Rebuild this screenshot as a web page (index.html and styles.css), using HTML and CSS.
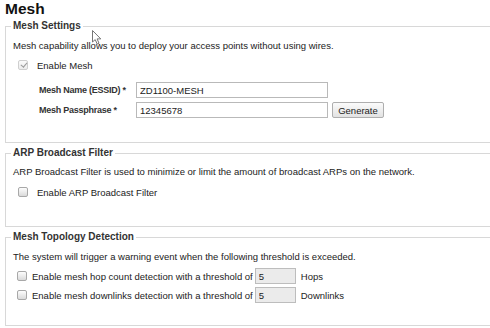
FILE: index.html
```html
<!DOCTYPE html>
<html lang="en">
<head>
	<meta charset="UTF-8">
	<title>Mesh</title>
	<link rel="stylesheet" href="styles.css">
</head>
<body>

<div class="page">
	<h1>Mesh</h1>

	<fieldset class="section mesh-settings">
		<legend>Mesh Settings</legend>
		<p class="desc">Mesh capability allows you to deploy your access points without using wires.</p>
		<label class="check indent"><input type="checkbox" checked disabled> Enable Mesh</label>
		<div class="field first">
			<label for="essid">Mesh Name (ESSID) *</label>
			<input type="text" id="essid" class="text" value="ZD1100-MESH">
		</div>
		<div class="field">
			<label for="passphrase">Mesh Passphrase *</label>
			<input type="text" id="passphrase" class="text" value="12345678">
			<button type="button" class="btn">Generate</button>
		</div>
	</fieldset>

	<fieldset class="section arp-filter">
		<legend>ARP Broadcast Filter</legend>
		<p class="desc">ARP Broadcast Filter is used to minimize or limit the amount of broadcast ARPs on the network.</p>
		<label class="check indent"><input type="checkbox"> Enable ARP Broadcast Filter</label>
	</fieldset>

	<fieldset class="section topology">
		<legend>Mesh Topology Detection</legend>
		<p class="desc">The system will trigger a warning event when the following threshold is exceeded.</p>
		<div class="check threshold first">
			<input type="checkbox" id="hop-count">
			<label for="hop-count">Enable mesh hop count detection with a threshold of</label>
			<input type="text" class="num" value="5" disabled>
			<span>Hops</span>
		</div>
		<div class="check threshold">
			<input type="checkbox" id="downlinks">
			<label for="downlinks">Enable mesh downlinks detection with a threshold of</label>
			<input type="text" class="num" value="5" disabled>
			<span>Downlinks</span>
		</div>
	</fieldset>

	<svg class="cursor" width="10" height="15" viewBox="0 0 10 15">
		<path d="M0.5 0.5 L0.5 12 L3.2 9.6 L5.2 14 L7 13.2 L5.1 8.9 L8.8 8.9 Z" fill="#fff" stroke="#555" stroke-width="1" stroke-linejoin="round"/>
	</svg>
</div>

</body>
</html>
```

FILE: styles.css
```css
html, body {
	margin: 0;
	padding: 0;
	overflow: hidden;
}

body {
	background: #fff;
	color: #222;
	font-family: "Liberation Sans", Arial, sans-serif;
	font-size: 9.5px;
}

.page {
	position: relative;
}

h1 {
	margin: 0;
	padding: 0 0 0 5px;
	font-size: 15.5px;
	line-height: 18px;
	font-weight: 700;
	color: #111;
}

/* the right edge of each box runs off the frame in the original */
.section {
	margin: 1px 0 3px 5px;
	padding: 0 0 0 7px;
	border: 1px solid #d8d8d8;
	border-right: 0;
}

.section legend {
	margin-left: -2px;
	padding: 0 2px;
	font-size: 10px;
	font-weight: 700;
	line-height: 14px;
	color: #333;
}

.desc {
	margin: 6px 0 0;
	line-height: 14px;
}

.arp-filter .desc {
	margin-top: 5px;
}

.check {
	display: flex;
	align-items: center;
	gap: 5px;
	height: 14px;
	margin-top: 5px;
	padding-left: 4px;
}

.check.indent {
	gap: 9px;
	padding-left: 5px;
}

.arp-filter .check {
	margin-top: 6px;
}

.check input[type="checkbox"] {
	-webkit-appearance: none;
	appearance: none;
	position: relative;
	box-sizing: border-box;
	width: 10px;
	height: 10px;
	margin: 0;
	border: 1px solid #a8a8a8;
	border-radius: 2px;
	background: linear-gradient(#fdfdfd, #dadada);
}

.check input[type="checkbox"]:disabled {
	border-color: #cfcfcf;
	background: linear-gradient(#fafafa, #ececec);
}

.check input[type="checkbox"]:checked::after {
	content: "";
	position: absolute;
	left: 2.5px;
	top: 0;
	width: 2.5px;
	height: 5px;
	border: solid #9a9a9a;
	border-width: 0 1.5px 1.5px 0;
	transform: rotate(40deg);
}

.field {
	display: flex;
	align-items: center;
	height: 16px;
	margin-top: 4px;
	padding-left: 26px;
}

.field.first {
	margin-top: 10px;
}

.field label {
	width: 97px;
	font-size: 9px;
	font-weight: 700;
	letter-spacing: -0.25px;
	color: #333;
}

.text {
	box-sizing: border-box;
	width: 192px;
	height: 16px;
	margin: 0;
	padding: 0 3px;
	border: 1px solid #b9b9b9;
	font-family: inherit;
	font-size: 9.5px;
	color: #222;
}

.btn {
	box-sizing: border-box;
	width: 52px;
	height: 16px;
	margin: 0 0 0 4px;
	padding: 0;
	border: 1px solid #aeaeae;
	border-radius: 2px;
	background: linear-gradient(#fbfbfb, #e2e2e2);
	font-family: inherit;
	font-size: 9.5px;
	color: #222;
}

.mesh-settings {
	padding-bottom: 24px;
}

.arp-filter {
	padding-bottom: 27px;
}

.topology {
	padding-bottom: 22px;
}

.threshold {
	height: 16px;
}

.threshold.first {
	margin-top: 4px;
}

.threshold + .threshold {
	margin-top: 3px;
}

.threshold label {
	margin-right: -3px;
}

.num {
	box-sizing: border-box;
	width: 41px;
	height: 16px;
	margin: 0;
	padding: 0 3px;
	border: 1px solid #bdbdbd;
	background: #ebebeb;
	font-family: inherit;
	font-size: 9.5px;
	color: #222;
}

.cursor {
	position: absolute;
	left: 92px;
	top: 30px;
	opacity: 0.8;
}
```
